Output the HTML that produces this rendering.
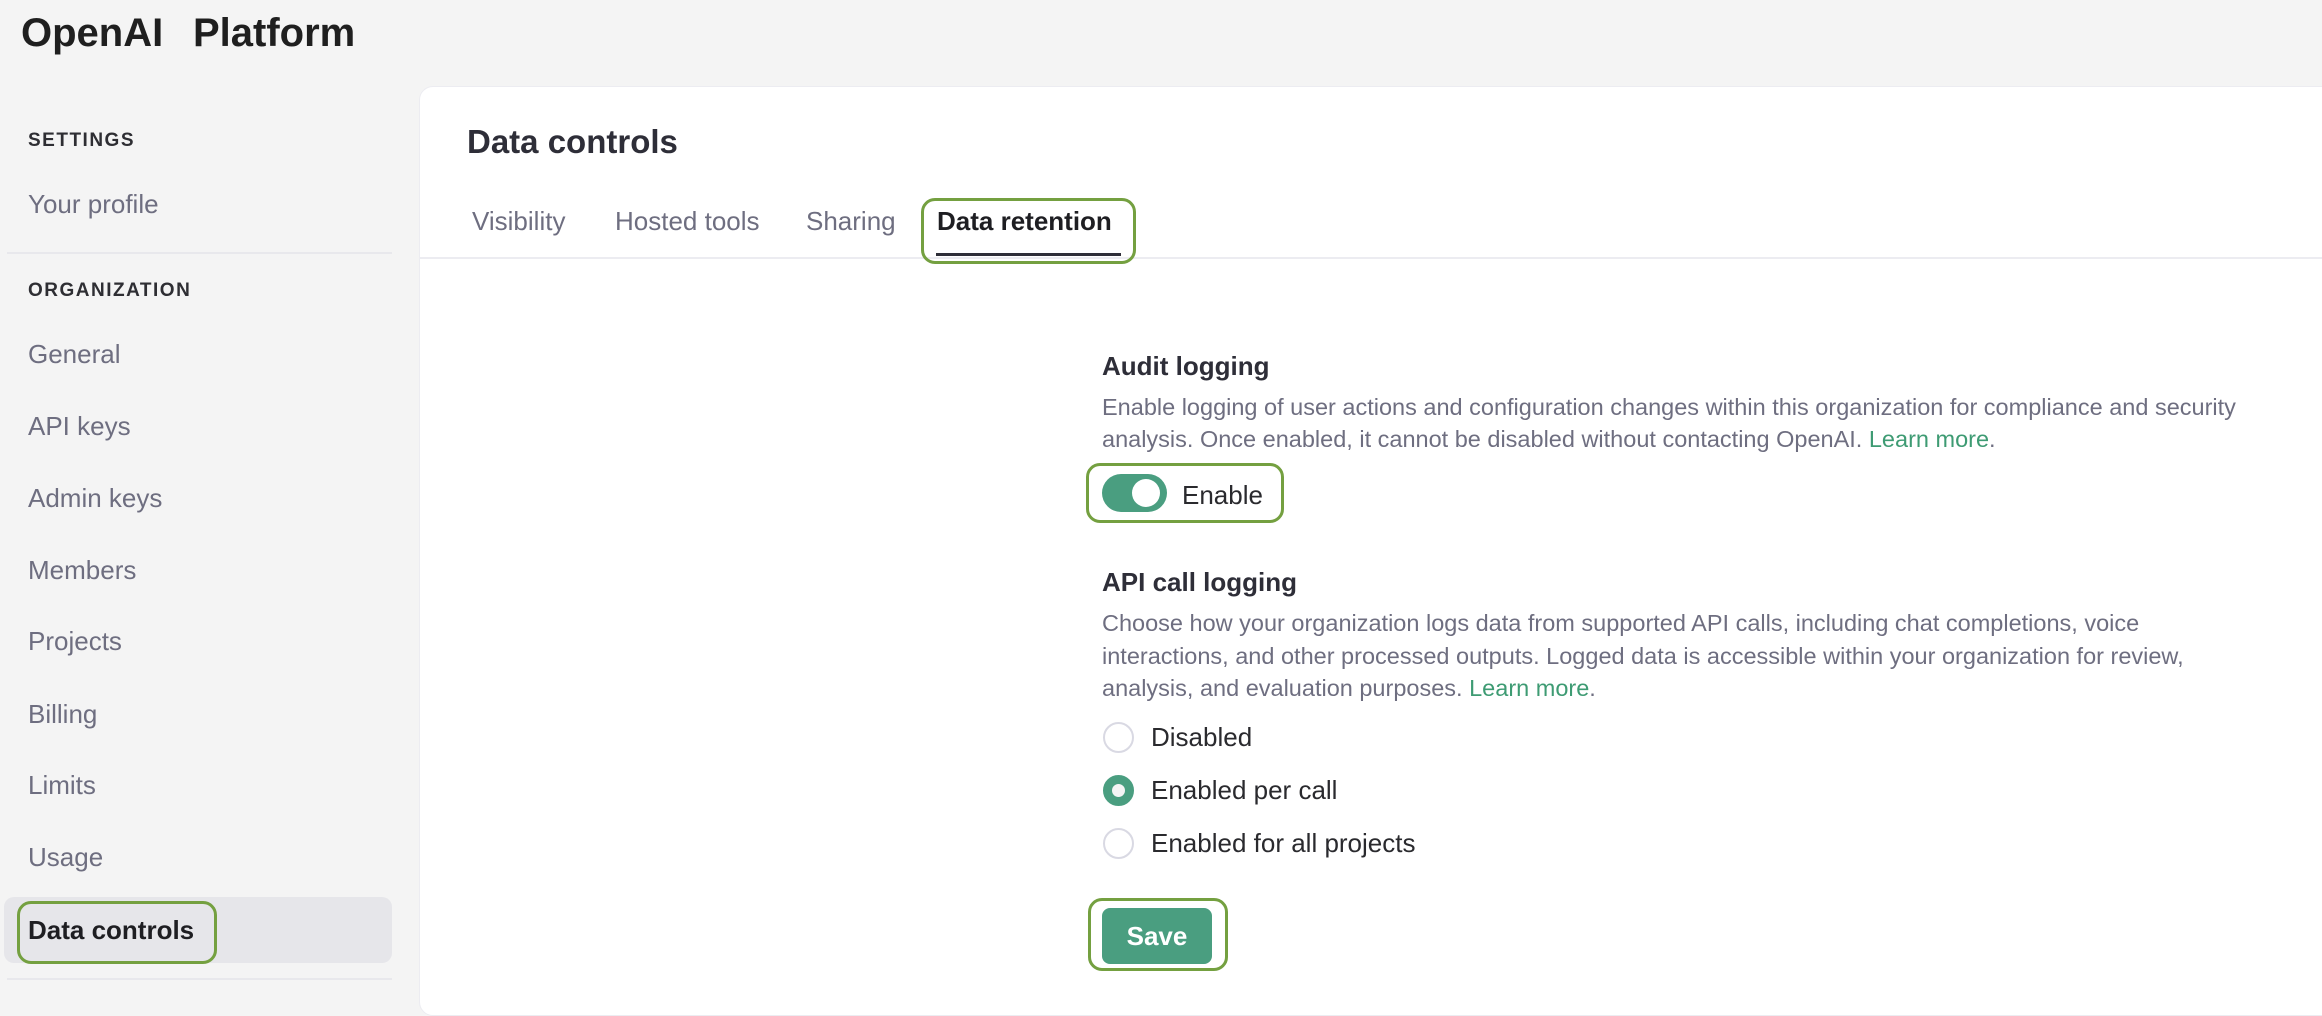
<!DOCTYPE html>
<html><head><meta charset="utf-8"><style>
*{box-sizing:border-box;margin:0;padding:0}
body{width:2322px;height:994px;background:#f4f4f4;font-family:"Liberation Sans",sans-serif;position:relative;overflow:hidden;color:#202123}
.a{position:absolute;white-space:nowrap}
.title{top:11px;font-size:40px;font-weight:700;color:#1f1f1f}
.sec{left:28px;font-size:19px;font-weight:700;letter-spacing:1.5px;color:#2e2e33}
.nav{left:28px;font-size:26px;color:#6e6e80}
.card{left:419px;top:86px;width:1920px;height:930px;background:#fff;border-radius:14px;border:1px solid #ececf1}
.tab{font-size:26px;color:#6e6e80;top:206px}
.box{position:absolute;border:3px solid #74a040;border-radius:14px}
.h{font-size:26px;font-weight:700;color:#2e2e38;left:1102px}
.p{font-size:23.5px;color:#6e6e80;left:1102px}
.p a{color:#3e9b73;text-decoration:none}
.radio{position:absolute;left:1103px;width:31px;height:31px;border-radius:50%;border:2px solid #d9d9e3;background:#fff}
.rl{left:1151px;font-size:26px;color:#2a2a2e}
</style></head><body>
<div class="a title" style="left:21px">OpenAI</div>
<div class="a title" style="left:193px">Platform</div>
<div class="a sec" style="top:130px">SETTINGS</div>
<div class="a nav" style="top:189px">Your profile</div>
<div class="a" style="left:7px;top:252px;width:385px;height:2px;background:#e8e8ec"></div>
<div class="a sec" style="top:280px">ORGANIZATION</div>
<div class="a nav" style="top:339px">General</div>
<div class="a nav" style="top:411px">API keys</div>
<div class="a nav" style="top:483px">Admin keys</div>
<div class="a nav" style="top:555px">Members</div>
<div class="a nav" style="top:626px">Projects</div>
<div class="a nav" style="top:699px">Billing</div>
<div class="a nav" style="top:770px">Limits</div>
<div class="a nav" style="top:842px">Usage</div>
<div class="a" style="left:4px;top:897px;width:388px;height:66px;background:#e6e6ea;border-radius:10px"></div>
<div class="a nav" style="top:915px;color:#1e1e22;font-weight:700">Data controls</div>
<div class="box" style="left:17px;top:901px;width:200px;height:63px"></div>
<div class="a" style="left:7px;top:978px;width:385px;height:2px;background:#e8e8ec"></div>

<div class="a card"></div>
<div class="a" style="left:467px;top:123px;font-size:33px;font-weight:700;color:#2e2e38">Data controls</div>
<div class="a tab" style="left:472px">Visibility</div>
<div class="a tab" style="left:615px">Hosted tools</div>
<div class="a tab" style="left:806px">Sharing</div>
<div class="a tab" style="left:937px;color:#1e1e22;font-weight:700">Data retention</div>
<div class="a" style="left:420px;top:257px;width:1902px;height:2px;background:#ececf1"></div>
<div class="a" style="left:936px;top:253px;width:185px;height:3px;background:#2e2e38"></div>
<div class="box" style="left:921px;top:198px;width:215px;height:66px"></div>

<div class="a h" style="top:351px">Audit logging</div>
<div class="a p" style="top:394px">Enable logging of user actions and configuration changes within this organization for compliance and security</div>
<div class="a p" style="top:426px">analysis. Once enabled, it cannot be disabled without contacting OpenAI. <a>Learn more</a>.</div>
<div class="a" style="left:1102px;top:474px;width:65px;height:38px;border-radius:19px;background:#4a9e80"></div>
<div class="a" style="left:1132px;top:479px;width:28px;height:28px;border-radius:50%;background:#fff"></div>
<div class="a" style="left:1182px;top:480px;font-size:26px;color:#2a2a2e">Enable</div>
<div class="box" style="left:1086px;top:463px;width:198px;height:60px"></div>

<div class="a h" style="top:567px">API call logging</div>
<div class="a p" style="top:610px">Choose how your organization logs data from supported API calls, including chat completions, voice</div>
<div class="a p" style="top:643px">interactions, and other processed outputs. Logged data is accessible within your organization for review,</div>
<div class="a p" style="top:675px">analysis, and evaluation purposes. <a>Learn more</a>.</div>

<div class="radio" style="top:722px"></div>
<div class="a rl" style="top:722px">Disabled</div>
<div class="radio" style="top:775px;border:9px solid #4a9e80;background:#f4f4f4"></div>
<div class="a rl" style="top:775px">Enabled per call</div>
<div class="radio" style="top:828px"></div>
<div class="a rl" style="top:828px">Enabled for all projects</div>

<div class="a" style="left:1102px;top:908px;width:110px;height:56px;border-radius:8px;background:#4a9e80;color:#fff;font-size:26px;font-weight:700;text-align:center;line-height:56px">Save</div>
<div class="box" style="left:1088px;top:898px;width:140px;height:73px"></div>
</body></html>
